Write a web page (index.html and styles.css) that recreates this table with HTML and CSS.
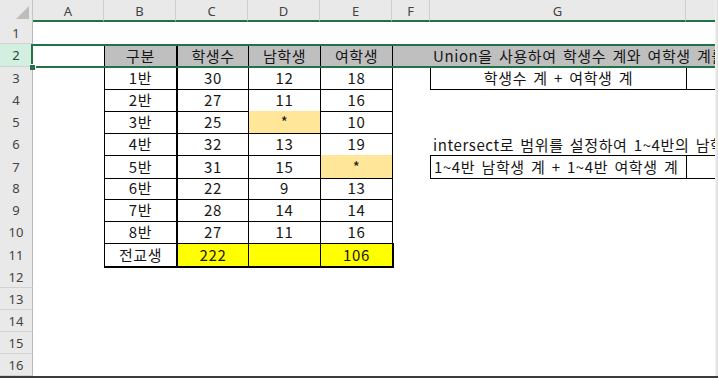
FILE: index.html
```html
<!DOCTYPE html>
<html lang="ko">
<head>
<meta charset="utf-8">
<title>Sheet1</title>
<link rel="stylesheet" href="styles.css">
</head>
<body>
<div class="sheet">
  <div class="row hdr">
    <div class="corner"><span class="tri"></span></div>
    <div class="ch">A</div><div class="ch">B</div><div class="ch">C</div><div class="ch">D</div>
    <div class="ch">E</div><div class="ch">F</div><div class="ch">G</div><div class="ch"></div>
  </div>

  <div class="row">
    <div class="rh">1</div>
    <div></div><div></div><div></div><div></div><div></div><div></div><div></div><div></div>
  </div>

  <div class="row tall">
    <div class="rh on">2</div>
    <div></div>
    <div class="c gray bl">구분</div>
    <div class="c gray blk">학생수</div>
    <div class="c gray bl">남학생</div>
    <div class="c gray bl">여학생</div>
    <div class="c gray bl"></div>
    <div class="c gray left wide">Union을 사용하여 학생수 계와 여학생 계를</div>
  </div>

  <div class="row">
    <div class="rh">3</div><div></div>
    <div class="c bl bb">1반</div><div class="c blk bb">30</div><div class="c bl bb">12</div><div class="c bl bb">18</div>
    <div class="c bl"></div>
    <div class="c bl bb">학생수 계 + 여학생 계</div>
    <div class="c bl bb"></div>
  </div>

  <div class="row">
    <div class="rh">4</div><div></div>
    <div class="c bl bb">2반</div><div class="c blk bb">27</div><div class="c bl bb">11</div><div class="c bl bb">16</div>
    <div class="c bl"></div><div></div><div></div>
  </div>

  <div class="row">
    <div class="rh">5</div><div></div>
    <div class="c bl bb">3반</div><div class="c blk bb">25</div><div class="c bl bb gold">*</div><div class="c bl bb">10</div>
    <div class="c bl"></div><div></div><div></div>
  </div>

  <div class="row">
    <div class="rh">6</div><div></div>
    <div class="c bl bb">4반</div><div class="c blk bb">32</div><div class="c bl bb">13</div><div class="c bl bb">19</div>
    <div class="c bl"></div>
    <div class="c left wide">intersect로 범위를 설정하여 1~4반의 남학</div>
  </div>

  <div class="row">
    <div class="rh">7</div><div></div>
    <div class="c bl bb">5반</div><div class="c blk bb">31</div><div class="c bl bb">15</div><div class="c bl bb gold">*</div>
    <div class="c bl"></div>
    <div class="c left bl bb bt">1~4반 남학생 계 + 1~4반 여학생 계</div>
    <div class="c bl bb bt"></div>
  </div>

  <div class="row">
    <div class="rh">8</div><div></div>
    <div class="c bl bb">6반</div><div class="c blk bb">22</div><div class="c bl bb">9</div><div class="c bl bb">13</div>
    <div class="c bl"></div><div></div><div></div>
  </div>

  <div class="row">
    <div class="rh">9</div><div></div>
    <div class="c bl bb">7반</div><div class="c blk bb">28</div><div class="c bl bb">14</div><div class="c bl bb">14</div>
    <div class="c bl"></div><div></div><div></div>
  </div>

  <div class="row">
    <div class="rh">10</div><div></div>
    <div class="c bl bb">8반</div><div class="c blk bb">27</div><div class="c bl bb">11</div><div class="c bl bb">16</div>
    <div class="c bl"></div><div></div><div></div>
  </div>

  <div class="row tall">
    <div class="rh">11</div><div></div>
    <div class="c bl total">전교생</div><div class="c blk total yel">222</div><div class="c bl total yel"></div><div class="c bl total yel">106</div>
    <div class="c blk2"></div><div></div><div></div>
  </div>

  <div class="row"><div class="rh">12</div></div>
  <div class="row"><div class="rh">13</div></div>
  <div class="row"><div class="rh">14</div></div>
  <div class="row"><div class="rh">15</div></div>
  <div class="row"><div class="rh">16</div></div>

  <!-- selection frame around row 2 with its fill handle -->
  <div class="sel"><span class="handle"></span></div>
  <div class="edge"></div>
</div>
</body>
</html>
```

FILE: styles.css
```css
:root {
  --cols: 33px 71px 72px 72px 72px 72px 38px 256px 32px;
  --green: #217346;
  --line: #000;
}

* { box-sizing: border-box; }

body {
  margin: 0;
  width: 718px;
  height: 378px;
  overflow: hidden;
  background: #fff;
  font-family: "Noto Sans CJK KR", sans-serif;
}

.sheet {
  position: relative;
  height: 378px;
  border-bottom: 2px solid #3c3c3c;
}

.row {
  display: grid;
  grid-template-columns: var(--cols);
  height: 22px;
}

.row.tall { height: 23px; }

/* column headers */
.hdr {
  background: #e9e9e9;
}

.corner {
  position: relative;
  border-right: 1px solid #c4c4c4;
}

.tri {
  position: absolute;
  right: 3px;
  bottom: 3px;
  width: 0;
  height: 0;
  border-left: 13px solid transparent;
  border-bottom: 13px solid #bdbdbd;
}

.ch {
  display: flex;
  align-items: center;
  justify-content: center;
  border-right: 1px solid #cfcfcf;
  border-bottom: 2px solid var(--green);
  font: 13px "Noto Sans", sans-serif;
  color: #444;
  padding-top: 1px;
}

/* row headers */
.rh {
  display: flex;
  align-items: center;
  justify-content: center;
  background: #e9e9e9;
  border-right: 1px solid #b8b8b8;
  border-bottom: 1px solid #d2d2d2;
  font: 13px "Noto Sans", sans-serif;
  color: #444;
}

.rh.on {
  background: #d3efdf;
  color: #1f4d33;
}

/* cells */
.c {
  display: flex;
  align-items: center;
  justify-content: center;
  font-size: 15px;
  letter-spacing: 0.6px;
  word-spacing: 1.5px;
  color: #161616;
  white-space: nowrap;
  padding-bottom: 1px;
}

.left {
  justify-content: flex-start;
  padding-left: 3px;
}

.wide {
  grid-column: span 2;
  overflow: hidden;
}

.bl { border-left: 1px solid var(--line); }
.blk { border-left: 2px solid var(--line); }
.blk2 { border-left: 2px solid var(--line); }
.bb { border-bottom: 1px solid var(--line); }
.bt { border-top: 1px solid var(--line); }

.total {
  border-top: 1px solid var(--line);
  border-bottom: 2px solid var(--line);
}

.gray { background: #bfbfbf; }
.gold { background: #ffe699; }
.yel { background: #ffff00; }

/* active selection: whole row 2 */
.sel {
  position: absolute;
  left: 31px;
  top: 44px;
  right: 0;
  height: 24px;
  border: 2px solid var(--green);
  border-right: none;
}

.handle {
  position: absolute;
  left: -3px;
  bottom: -4px;
  width: 6px;
  height: 6px;
  background: var(--green);
  border: 1px solid #fff;
  border-left: none;
  border-bottom: none;
}

.edge {
  position: absolute;
  top: 0;
  right: 0;
  width: 3px;
  height: 376px;
  background: linear-gradient(to right, #f3f3f3, #dcdcdc);
}
```
